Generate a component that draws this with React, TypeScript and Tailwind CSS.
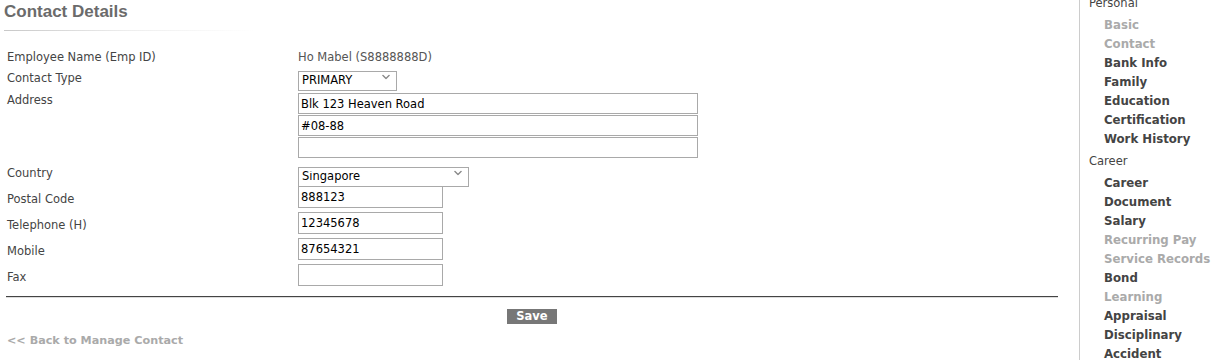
const body = '"DejaVu Sans", Verdana, sans-serif';

function Chevron() {
  return (
    <svg className="pointer-events-none absolute right-[7px] top-1/2 -translate-y-1/2" width="8" height="5" viewBox="0 0 8 5">
      <path d="M0.5 0.5 L4 4 L7.5 0.5" fill="none" stroke="#888" strokeWidth="1.3" />
    </svg>
  );
}

function Select({ value, width }: { value: string; width: string }) {
  return (
    <div className={`relative h-[20px] ${width}`}>
      <select
        defaultValue={value}
        className="h-full w-full appearance-none border border-[#a9a9a9] bg-white pb-[1px] pl-[3px] text-[11.5px] leading-none text-black outline-none"
        style={{ fontFamily: body }}
      >
        <option>{value}</option>
      </select>
      <Chevron />
    </div>
  );
}

function Input({ value = "", width, height = "h-[22px]" }: { value?: string; width: string; height?: string }) {
  return (
    <input
      defaultValue={value}
      className={`${height} ${width} border border-[#a9a9a9] bg-white px-[2px] text-[11.5px] text-black outline-none`}
      style={{ fontFamily: body }}
    />
  );
}

function Label({ children, pad = "" }: { children: React.ReactNode; pad?: string }) {
  return <div className={`w-[298px] shrink-0 pl-[7px] text-[11.5px] leading-[17px] text-[#444] ${pad}`}>{children}</div>;
}

const nav: { label: string; header?: boolean; off?: boolean }[] = [
  { label: "Personal", header: true },
  { label: "Basic", off: true },
  { label: "Contact", off: true },
  { label: "Bank Info" },
  { label: "Family" },
  { label: "Education" },
  { label: "Certification" },
  { label: "Work History" },
  { label: "Career", header: true },
  { label: "Career" },
  { label: "Document" },
  { label: "Salary" },
  { label: "Recurring Pay", off: true },
  { label: "Service Records", off: true },
  { label: "Bond" },
  { label: "Learning", off: true },
  { label: "Appraisal" },
  { label: "Disciplinary" },
  { label: "Accident" },
];

export default function App() {
  return (
    <div className="flex h-[360px] w-[1216px] overflow-hidden bg-white" style={{ fontFamily: body }}>
      <div className="w-[1060px] shrink-0">
        <h1 className="pl-[4px] pt-[1px] text-[17px] font-bold leading-[22px] text-[#6b6b6b]" style={{ fontFamily: '"Liberation Sans", Arial, sans-serif' }}>
          Contact Details
        </h1>
        <div className="ml-[4px] mt-[7px] h-[1px] w-[250px] bg-gradient-to-r from-[#c8c8c8] via-[#eeeeee] to-white" />

        <div className="mt-[19px] flex flex-col">
          <div className="flex h-[16px] items-end">
            <Label>Employee Name (Emp ID)</Label>
            <span className="text-[11.5px] leading-[17px] text-[#555]">Ho Mabel (S8888888D)</span>
          </div>
          <div className="mt-[1px] flex items-start">
            <Label pad="pt-[3px]">Contact Type</Label>
            <Select value="PRIMARY" width="w-[99px]" />
          </div>
          <div className="mt-[6px] flex">
            <Label>
              <div className="mt-[-1px]">Address</div>
            </Label>
            <div className="flex flex-col gap-[1px]">
              <Input value="Blk 123 Heaven Road" width="w-[400px]" height="h-[21px]" />
              <Input value="#08-88" width="w-[400px]" height="h-[21px]" />
              <Input width="w-[400px]" height="h-[21px]" />
            </div>
          </div>
          <div className="mt-[5px] flex items-start">
            <Label pad="pt-[2px]">Country</Label>
            <Select value="Singapore" width="w-[171px]" />
          </div>
          {[
            ["Postal Code", "888123"],
            ["Telephone (H)", "12345678"],
            ["Mobile", "87654321"],
            ["Fax", ""],
          ].map(([l, v], i) => (
            <div key={l} className={`${i === 0 ? "mt-[3px]" : "mt-[4px]"} flex items-start`}>
              <Label pad="pt-[5px]">{l}</Label>
              <Input value={v} width="w-[145px]" />
            </div>
          ))}
        </div>

        <div className="ml-[6px] mt-[10px] h-[2px] w-[1052px] border-t border-[#444] border-b-[#ddd] border-b" />

        <div className="mt-[11px] flex justify-center pl-[4px]">
          <button className="h-[15px] bg-[#777] px-[9px] text-[11.5px] font-bold leading-[15px] text-white">Save</button>
        </div>

        <div className="mt-[9px] pl-[7px] text-[11.2px] font-bold text-[#aaa]">&lt;&lt; Back to Manage Contact</div>
      </div>

      <div className="ml-[19px] flex-1 border-l border-[#ccc] pl-[9px]">
        <div className="-mt-[6px] flex flex-col">
          {nav.map((n, i) =>
            n.header ? (
              <div key={i} className={`${i === 0 ? "" : "mt-[3px]"} h-[19px] text-[11.5px] leading-[19px] text-[#444]`}>
                {n.label}
              </div>
            ) : (
              <div
                key={i}
                className={`${nav[i - 1]?.header ? "mt-[3px]" : ""} h-[19px] pl-[15px] text-[11.75px] font-bold leading-[19px] ${n.off ? "text-[#aaa]" : "text-[#444]"}`}
              >
                {n.label}
              </div>
            )
          )}
        </div>
      </div>
    </div>
  );
}
